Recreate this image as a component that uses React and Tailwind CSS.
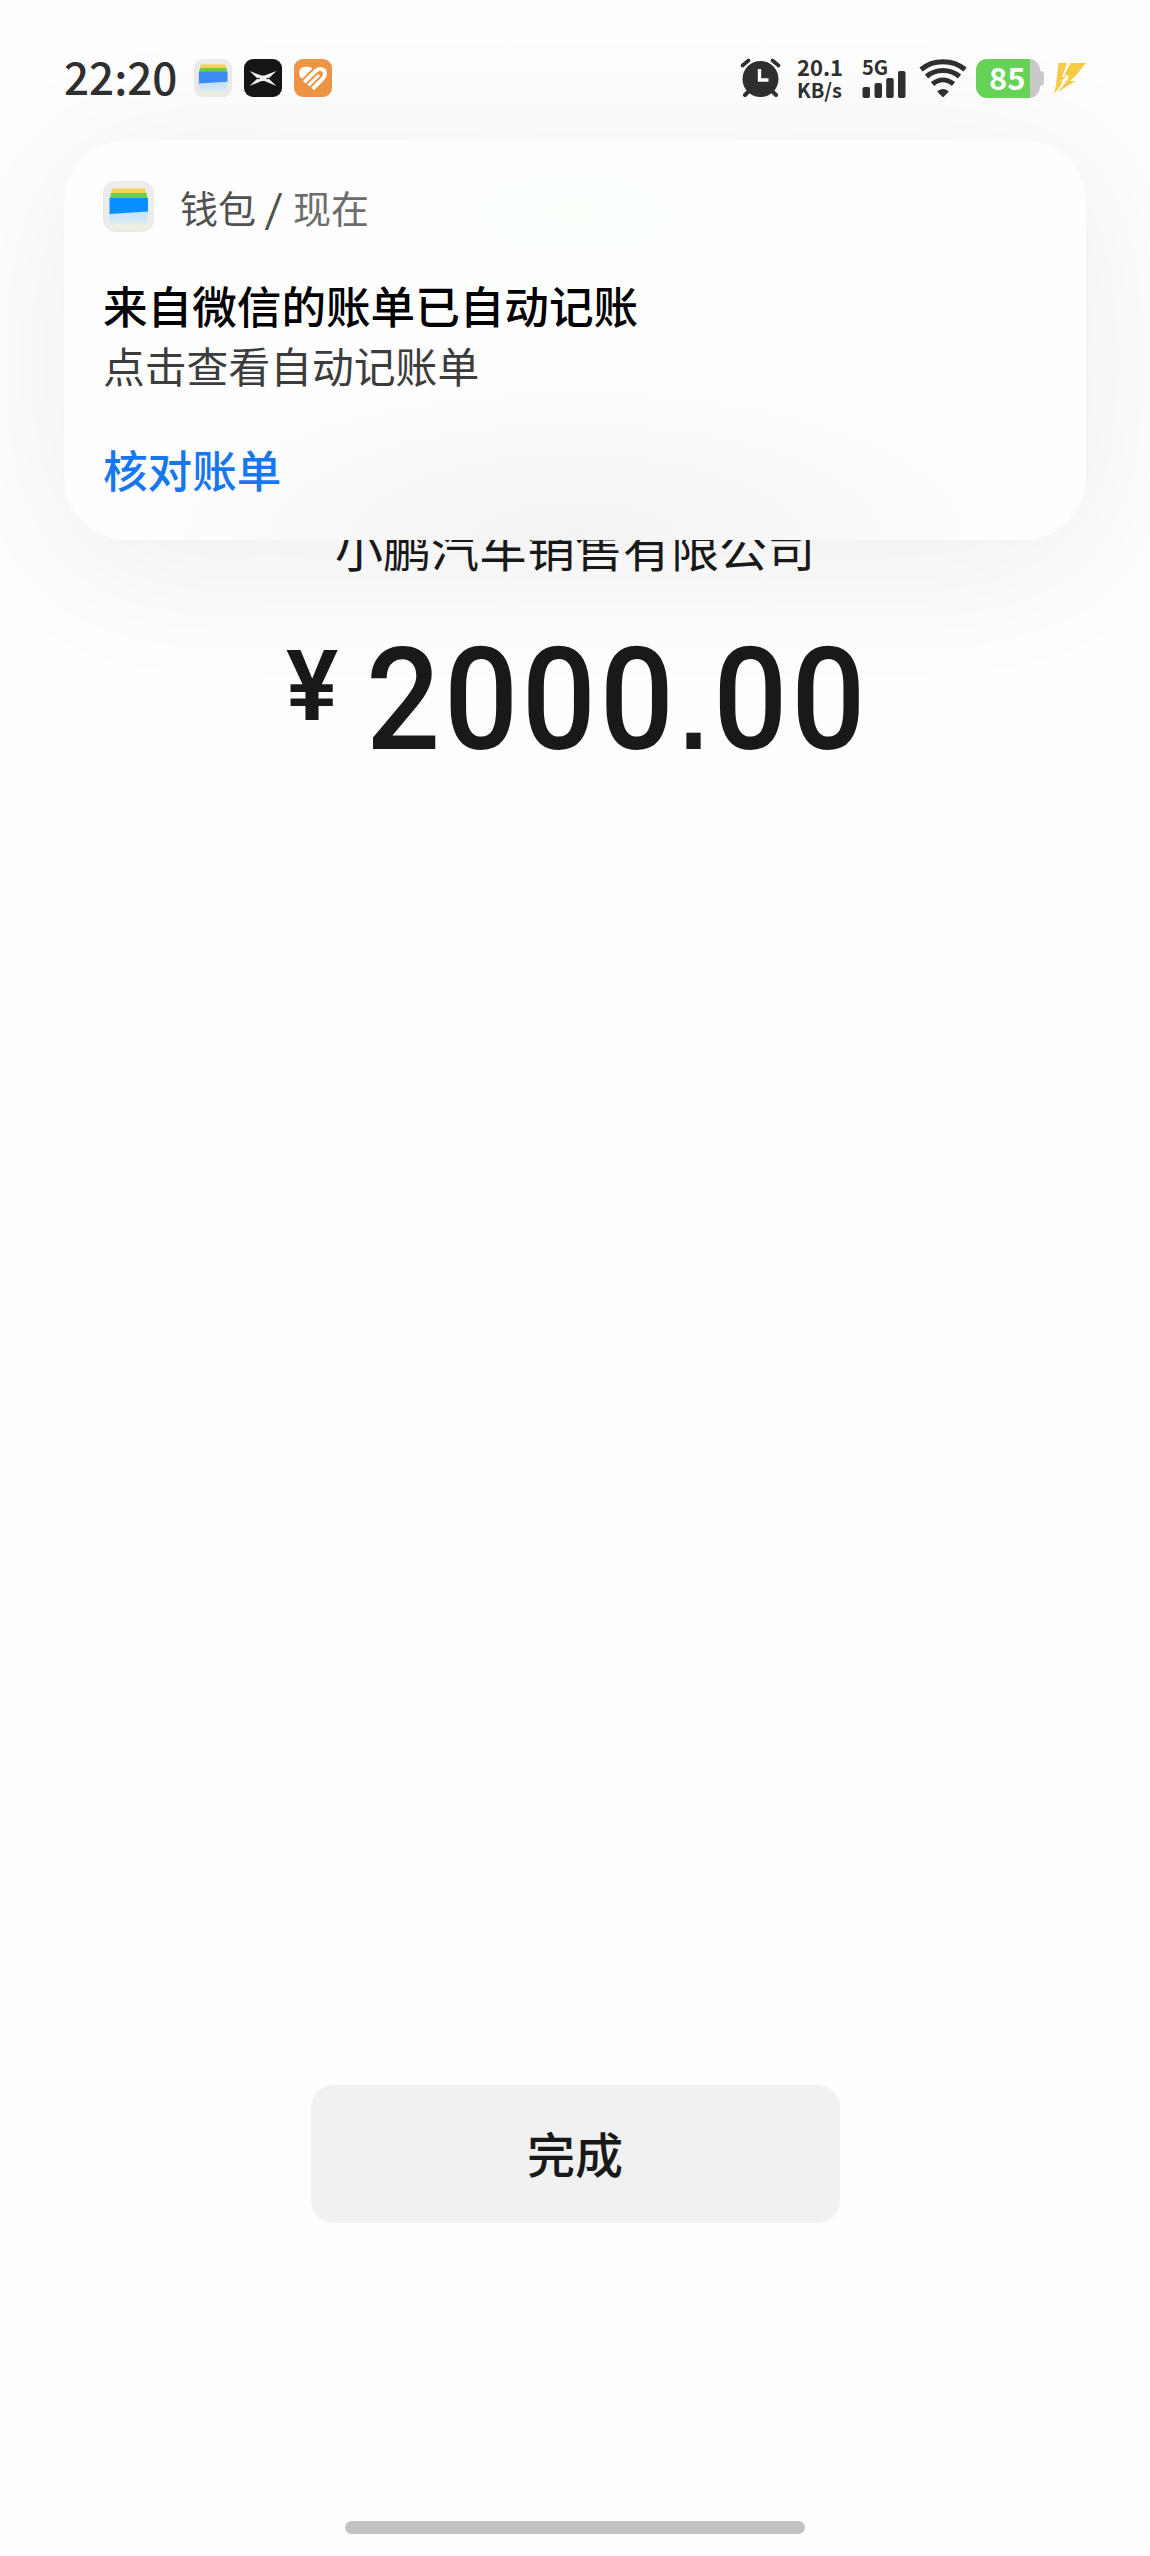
import React from "react";

const cjk = "font-['Noto_Sans_CJK_SC',sans-serif]";

const WalletIcon = ({ className, sheet = "#0a8fff" }) => (
  <svg viewBox="0 0 51 51" className={className}>
    <defs>
      <linearGradient id="walletGlow" x1="0" y1="0" x2="0" y2="1">
        <stop offset="0" stopColor="#c4e2fd" />
        <stop offset="0.5" stopColor="#d2e8fa" />
        <stop offset="0.8" stopColor="#f1f2dc" />
        <stop offset="1" stopColor="#ececec" />
      </linearGradient>
    </defs>
    <rect x="0.5" y="0.5" width="50" height="50" rx="12" fill="#ececec" stroke="#e8e8e8" />
    <path d="M6 32 L45 30 L44 49 L7 49 Z" fill="url(#walletGlow)" />
    <path d="M9 7.5 H42 L43 13 H8 Z" fill="#f7d154" />
    <path d="M8 12 H43.5 L44.5 17.5 H7 Z" fill="#66d13c" />
    <path d="M6.5 17 H45 V30.5 L6.5 33 Z" fill={sheet} />
  </svg>
);

const XpengIcon = () => (
  <svg viewBox="0 0 38 38" className="size-[38px]">
    <rect width="38" height="38" rx="9" fill="#161616" />
    <path
      d="M5.5 12 L17.5 16.5 H20.5 L32.5 12 L24.5 19.5 L32.5 27 L20.5 22 H17.5 L5.5 27 L13.5 19.5 Z"
      fill="#f4f4f4"
    />
    <path d="M10 19.5 L15.5 18.8 V20.2 Z M28 19.5 L22.5 18.8 V20.2 Z" fill="#161616" />
  </svg>
);

const HeartIcon = () => (
  <svg viewBox="0 0 38 38" className="size-[38px]" fill="none" stroke="#fff">
    <rect width="38" height="38" rx="9" fill="#ee9645" stroke="none" />
    <path d="M7 19 C3.5 14.5 5 9 10 8 C13.5 7.3 16.5 8 18.5 9.5 L8.5 19.5 Z" fill="#fff" stroke="none" />
    <path d="M10.3 23.2 L22 11.7 C26 8 31.3 10.8 31 15 C30.9 17.5 29.5 19 28 20.5 L18.6 29.9" strokeWidth="3.9" />
    <path d="M14.5 26.5 L25 16" strokeWidth="3" />
  </svg>
);

const AlarmIcon = () => (
  <svg viewBox="0 0 42 40" className="h-10 w-[42px]" fill="none" stroke="#303030" strokeLinecap="round">
    <circle cx="20.5" cy="21" r="18" fill="#303030" stroke="none" />
    <path d="M2.5 7.5 L8.5 2.5 M32.5 2.5 L38.5 7.5" strokeWidth="3.6" />
    <path d="M8 34 L5 37 M33 34 L36 37" strokeWidth="4" />
    <path d="M19.5 11 V22 H28.5" stroke="#fff" strokeWidth="3.4" strokeLinecap="butt" />
  </svg>
);

const SignalIcon = () => (
  <svg viewBox="0 0 44 27" className="h-[27px] w-11" fill="#303030">
    <rect x="0.5" y="16" width="7.5" height="11" rx="2" />
    <rect x="12.5" y="12" width="7.5" height="15" rx="2" />
    <rect x="24.2" y="7" width="7.5" height="20" rx="2" />
    <rect x="36" y="0" width="7.5" height="27" rx="2" />
  </svg>
);

const WifiIcon = () => (
  <svg viewBox="0 0 48 39" className="ml-[13px] h-[39px] w-12" fill="none" stroke="#303030" strokeWidth="5">
    <path d="M2 10.5 C14 0 34 0 46 10.5" />
    <path d="M7.5 17.5 C17 9.5 31 9.5 40.5 17.5" />
    <path d="M13.5 25 C20 19.5 28 19.5 34.5 25" />
    <path d="M19.5 32.5 Q24 29.5 28.5 32.5 L24 37 Z" fill="#303030" strokeWidth="2" strokeLinejoin="round" />
  </svg>
);

const BoltIcon = () => (
  <svg viewBox="0 0 32 31" className="ml-2.5 h-[31px] w-8" fill="#f5cc47">
    <path d="M4.5 0 H13 L8 14 L13 13.5 L2 21.5 Z" />
    <path d="M16.5 0 H32 L20.5 14 L13 20 L14.5 12.5 H10 Z" />
    <path d="M0 31 L2.5 20 L9 17.5 L6 23.5 Z" />
    <path d="M12 18 H21.5 L3 29.5 L10.5 21 Z" />
  </svg>
);

const StatusBar = () => (
  <header className="flex h-10 items-center justify-between px-16 text-[#303030]">
    <div className="flex items-center">
      <span className={`w-[130px] pb-1 text-[44px] leading-9 font-medium ${cjk}`}>22:20</span>
      <div className="flex gap-3">
        <WalletIcon className="size-[38px]" sheet="#3d8df2" />
        <XpengIcon />
        <HeartIcon />
      </div>
    </div>
    <div className="flex h-10 shrink-0 items-center">
      <AlarmIcon />
      <div className={`ml-[15px] flex w-[65px] flex-col text-[22px] leading-[23px] font-bold ${cjk}`}>
        <span>20.1</span>
        <span className="text-[20px]">KB/s</span>
      </div>
      <div className="flex h-10 flex-col items-start justify-between">
        <span className={`-mb-3 text-[20px] leading-[18px] font-bold ${cjk}`}>5G</span>
        <SignalIcon />
      </div>
      <WifiIcon />
      <div className="ml-[9px] flex items-center">
        <div
          className={`flex h-[39px] w-16 items-center rounded-[11px] bg-[linear-gradient(90deg,#67d457_54px,#cacaca_54px)] pb-0.5 pl-[13px] text-[31px] leading-9 font-bold text-white ${cjk}`}
        >
          85
        </div>
        <div className="h-[15px] w-1 rounded-r bg-[#cacaca]" />
      </div>
      <BoltIcon />
    </div>
  </header>
);

const Notification = () => (
  <section
    className={`relative mx-16 mt-[42px] h-[400px] rounded-[62px] bg-[#fefefe] bg-[radial-gradient(ellipse_450px_170px_at_50%_100%,#f3f3f3,transparent),radial-gradient(ellipse_330px_150px_at_50%_18%,#fafffa,transparent)] px-[39px] pt-[41px] shadow-[0_20px_150px_rgba(0,0,0,0.07)] ${cjk}`}
  >
    <div className="flex h-[51px] items-center">
      <WalletIcon className="size-[51px]" />
      <p className="ml-[26px] flex text-[38px] leading-[51px] text-[#505050]">
        钱包
        <span className="mr-2 ml-1.5 inline-block w-[23px] scale-x-125 text-center">/</span>
        <span className="text-[#6d6d6d]">现在</span>
      </p>
    </div>
    <h1 className="mt-[43px] text-[44.6px] leading-[60px] font-medium text-black">来自微信的账单已自动记账</h1>
    <p className="text-[41.8px] leading-[60px] text-[#3c3c3c]">点击查看自动记账单</p>
    <button className="mt-11 block text-[44.6px] leading-[60px] font-medium text-[#1677f0]">核对账单</button>
  </section>
);

export default function App() {
  return (
    <div className="flex h-[2556px] w-[1150px] flex-col overflow-hidden bg-[#fefefe] pt-[58px]">
      <StatusBar />
      <Notification />
      <main className="-mt-6 flex grow flex-col items-center text-[#191919]">
        <p className={`text-[48px] leading-[60px] ${cjk}`}>小鹏汽车销售有限公司</p>
        <div className="mt-[55px] flex h-[140px] items-start font-['Roboto',sans-serif]">
          <span className="text-[98px] leading-[112px] font-semibold">¥</span>
          <span className="-mr-[49px] ml-7 origin-left scale-x-[0.92] text-[142px] leading-[140px] font-medium tracking-[4px]">
            2000
            <span className="mr-0.5 ml-0.5 font-['Liberation_Sans',sans-serif] text-[110px] leading-none font-bold">.</span>
            00
          </span>
        </div>
        <button
          className={`mt-auto h-[138px] w-[529px] rounded-[22px] bg-[#f1f1f1] pb-1 text-[48px] leading-none font-medium ${cjk}`}
        >
          完成
        </button>
        <div className="mt-[298px] mb-[22px] h-[13px] w-[460px] shrink-0 rounded-full bg-[#c2c2c2]" />
      </main>
    </div>
  );
}
